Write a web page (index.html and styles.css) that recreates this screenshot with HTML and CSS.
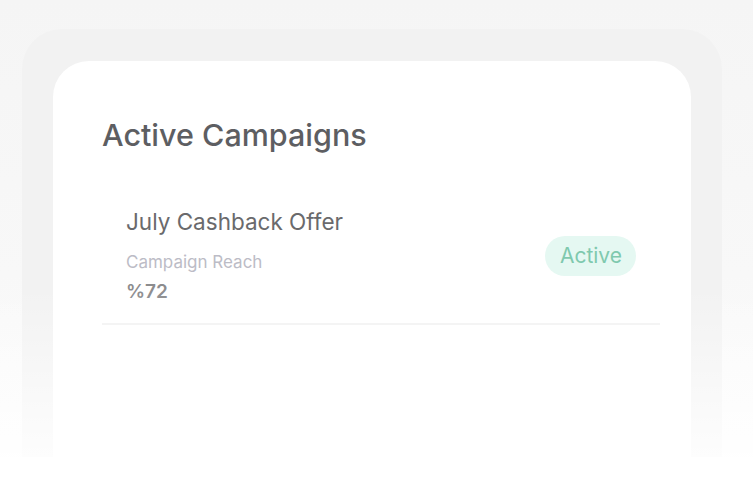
FILE: index.html
```html
<!DOCTYPE html>
<html lang="en">
<head>
  <meta charset="UTF-8">
  <meta name="viewport" content="width=device-width, initial-scale=1.0">
  <title>Active Campaigns</title>
  <link rel="stylesheet" href="styles.css">
</head>
<body>

  <div class="stage">
    <div class="frame">
      <div class="card">
        <h2 class="card-title">Active Campaigns</h2>

        <div class="campaign-row">
          <div class="campaign-info">
            <div class="campaign-name">July Cashback Offer</div>
            <div class="campaign-label">Campaign Reach</div>
            <div class="campaign-value">%72</div>
          </div>
          <span class="status-badge">Active</span>
        </div>
      </div>
    </div>
    <div class="fade"></div>
  </div>

</body>
</html>
```

FILE: styles.css
```css
body {
  margin: 0;
  background: #fff;
  font-family: 'Inter', 'Noto Sans', sans-serif;
}

.stage {
  position: relative;
  height: 457px;
  overflow: hidden;
  padding: 29px 31px 0 22px;
  box-sizing: border-box;
  background: linear-gradient(180deg, #f5f5f5 0%, #f8f8f8 60%, #fcfcfc 100%);
}

.frame {
  height: 100%;
  box-sizing: border-box;
  padding: 32px 31px 0 31px;
  background: #f2f2f2;
  border-radius: 40px 40px 0 0;
}

.card {
  height: 100%;
  box-sizing: border-box;
  padding: 56px 31px 0 49px;
  background: #fff;
  border-radius: 36px 36px 0 0;
}

.card-title {
  margin: 0;
  font-size: 30.5px;
  line-height: 36px;
  font-weight: 500;
  color: #5d5e62;
}

.campaign-row {
  display: flex;
  align-items: center;
  justify-content: space-between;
  margin-top: 55px;
  padding: 0 24px 20px 24px;
  border-bottom: 2px solid #f2f2f2;
}

.campaign-name {
  font-size: 22.5px;
  line-height: 28px;
  color: #6a6a6c;
}

.campaign-label {
  margin-top: 16px;
  font-size: 17px;
  line-height: 20px;
  color: #bcbcc6;
}

.campaign-value {
  margin-top: 9px;
  font-size: 19px;
  line-height: 22px;
  font-weight: 600;
  color: #8c8c8e;
}

.status-badge {
  padding: 7px 14px 7px 15px;
  border-radius: 20px;
  background: #e5f8f2;
  color: #7fc9ae;
  font-size: 21px;
  line-height: 26px;
}

.fade {
  position: absolute;
  left: 0;
  right: 0;
  bottom: 0;
  height: 170px;
  background: linear-gradient(180deg, rgba(255, 255, 255, 0) 0%, rgba(255, 255, 255, 0.85) 100%);
}
```
